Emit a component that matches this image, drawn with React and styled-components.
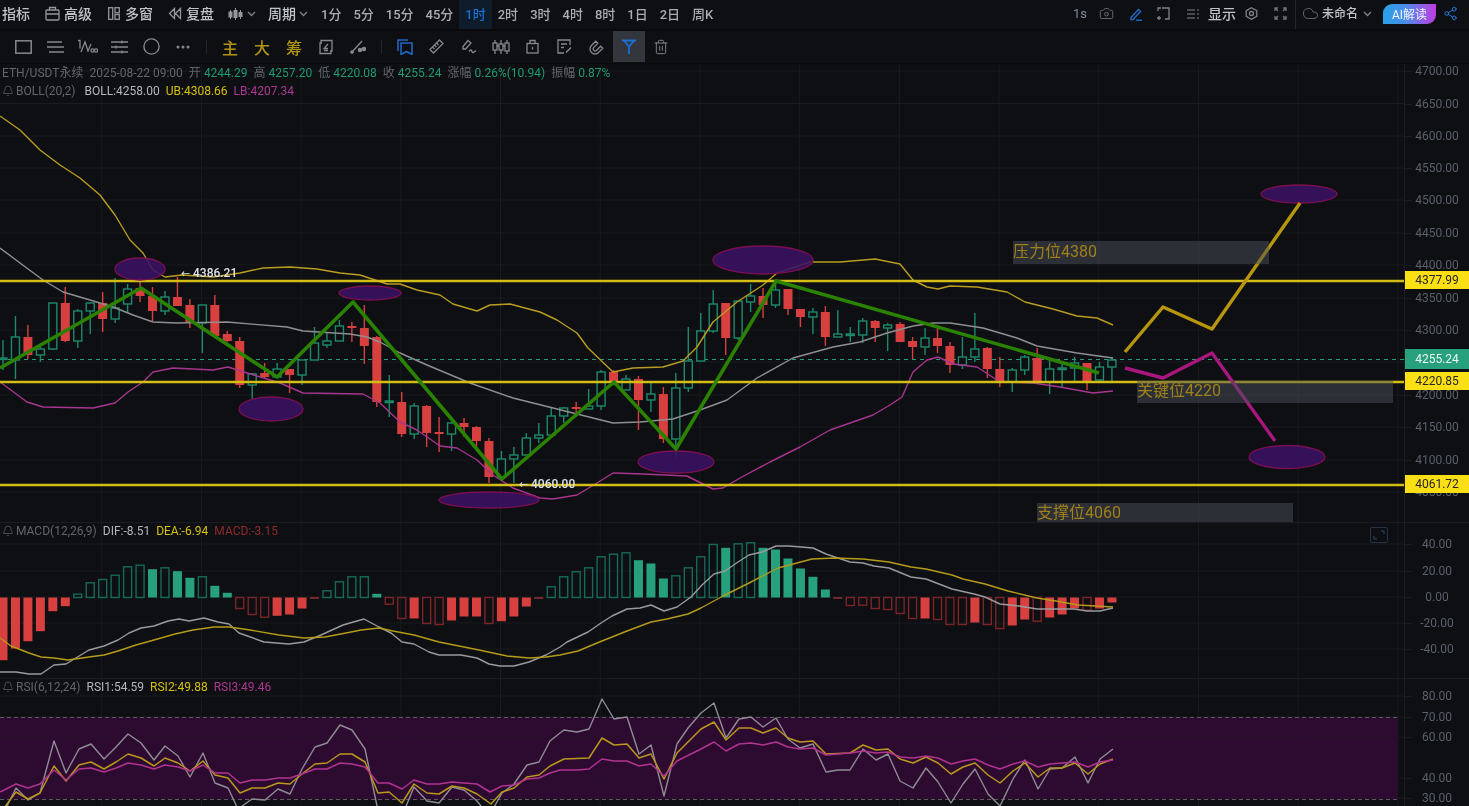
import React from 'react';
import styled, { createGlobalStyle } from 'styled-components';
import { Bell, Camera, Cloud, Share2, Trash2 } from 'lucide-react';

const GlobalStyle = createGlobalStyle`
  html, body { margin: 0; padding: 0; background: #0d0f12; }
  body { font-family: Roboto, "Noto Sans CJK SC", sans-serif; overflow: hidden; }
`;

const Page = styled.div`
  width: 1469px;
  height: 806px;
  display: flex;
  flex-direction: column;
  overflow: hidden;
  background: #0d0f12;
  color: #bfc3c9;
  filter: blur(0.35px);
`;

const TopBar = styled.div`
  height: 29px;
  flex: none;
  display: flex;
  align-items: center;
  padding: 0 11px 0 2px;
  border-bottom: 2px solid #090a0c;
  box-sizing: content-box;
  margin-bottom: -1px;
`;

const TopItem = styled.div`
  display: flex;
  align-items: center;
  gap: ${p => p.$gap ?? 4}px;
  margin-left: ${p => p.$ml ?? 0}px;
  margin-bottom: 2px;
  font-size: 14px;
  font-weight: 500;
  line-height: 20px;
  white-space: nowrap;
  flex: none;
`;

const Interval = styled.div`
  height: 29px;
  padding: 0 6px 2px;
  box-sizing: border-box;
  min-width: 20px;
  display: flex;
  align-items: center;
  justify-content: center;
  font-size: 13px;
  font-weight: 500;
  color: ${p => (p.$active ? '#1a6fd0' : '#a9adb4')};
  background: ${p => (p.$active ? '#0e1c2c' : 'transparent')};
  margin-left: ${p => p.$ml ?? 0}px;
`;

const RightGroup = styled.div`
  margin-left: auto;
  height: 29px;
  display: flex;
  align-items: center;
`;

const Speed = styled.span`
  font-size: 13px;
  color: #7b8ea4;
  width: 12px;
  margin-bottom: 2px;
`;

const VDivider = styled.div`
  width: 1px;
  height: 29px;
  background: #24262b;
  margin-left: ${p => p.$ml ?? 0}px;
`;

const AiButton = styled.div`
  width: 53px;
  height: 20px;
  margin-left: 11px;
  margin-bottom: 2px;
  display: flex;
  align-items: center;
  justify-content: center;
  color: #f2f5ff;
  font-size: 12px;
  border-radius: 9px 0 9px 0;
  background: linear-gradient(90deg, #27a3e6 0%, #4e8bea 45%, #c23be2 100%);
`;

const ToolBar = styled.div`
  height: 33px;
  flex: none;
  display: flex;
  align-items: center;
  padding-left: 7px;
  border-bottom: 1px solid #090a0c;
`;

const ToolCell = styled.div`
  width: 32px;
  height: 31px;
  flex: none;
  display: flex;
  align-items: center;
  justify-content: center;
  background: ${p => (p.$active ? '#33363c' : 'transparent')};
  color: #7f8287;
`;

const GoldChar = styled(ToolCell)`
  color: #b09314;
  font-size: 16px;
  font-weight: 500;
`;

const ToolSep = styled.div`
  width: 1px;
  height: 14px;
  background: #24262b;
  margin: 0 ${p => p.$r ?? 7}px 0 ${p => p.$l ?? 7}px;
`;

const Icon = styled.svg.attrs(p => ({
  width: p.$w,
  height: p.$h ?? p.$w,
  viewBox: `0 0 ${p.$w} ${p.$h ?? p.$w}`,
}))`
  display: block;
  flex: none;
  fill: none;
  stroke: currentColor;
  stroke-width: ${p => p.$sw ?? 1.3};
  color: ${p => p.$c ?? '#85888e'};
  margin-left: ${p => p.$ml ?? 0}px;
  margin-bottom: ${p => p.$mb ?? 0}px;
`;

const Pane = styled.section`
  flex: ${p => (p.$h ? 'none' : '1')};
  height: ${p => (p.$h ? `${p.$h}px` : 'auto')};
  box-sizing: border-box;
  display: grid;
  grid-template-columns: 1405px 64px;
  border-bottom: ${p => (p.$last ? 'none' : '1px solid #1a1c20')};
  min-height: 0;
`;

const ChartArea = styled.div`
  position: relative;
  overflow: hidden;
  border-right: 1px solid #1c1e22;
  box-sizing: content-box;
  width: 1404px;
  svg.chart { display: block; }
`;

const Axis = styled.div`
  position: relative;
  overflow: hidden;
`;

const Tick = styled.div`
  position: absolute;
  left: 0;
  right: 0;
  text-align: center;
  transform: translateY(-50%);
  font-size: 12px;
  line-height: 14px;
  color: #5a606c;
  &::before {
    content: '';
    position: absolute;
    left: 0;
    top: 50%;
    width: 7px;
    height: 1px;
    background: #1a1c20;
  }
`;

const PriceTag = styled.div`
  position: absolute;
  left: 0;
  right: 0;
  height: ${p => (p.$tall ? 20 : 18)}px;
  display: flex;
  align-items: center;
  justify-content: center;
  font-size: 12px;
  background: ${p => p.$bg};
  color: ${p => p.$fg};
`;

const Legend = styled.div`
  position: absolute;
  left: 2px;
  top: ${p => p.$top ?? 0}px;
  font-size: 12px;
  line-height: 18px;
  color: #62666c;
  pointer-events: none;
`;

const LegendRow = styled.div`
  display: flex;
  align-items: center;
  gap: ${p => p.$gap ?? 6}px;
  white-space: nowrap;
`;

const LegendName = styled.span`
  display: flex;
  align-items: center;
  gap: 2px;
  margin-right: ${p => p.$mr ?? 3}px;
`;

const Pair = styled.span`
  display: flex;
  gap: 3px;
`;

const Value = styled.span`
  color: ${p => p.$c ?? '#1f9a75'};
`;

const Note = styled.div`
  position: absolute;
  height: ${p => p.$h}px;
  width: 256px;
  line-height: ${p => p.$h - 2}px;
  font-size: 16px;
  color: #a08018;
  background: rgba(76, 80, 88, 0.5);
  white-space: nowrap;
`;

const ExpandBox = styled.div`
  position: absolute;
  left: 1370px;
  top: 4px;
  width: 18px;
  height: 16px;
  box-sizing: border-box;
  border: 1px solid #223349;
  border-radius: 2px;
  display: flex;
  align-items: center;
  justify-content: center;
`;

// pixel read off the chart: wickTop, bodyTop, bodyBottom, wickBottom, up/down
const candles = [
  [340, 358, 359.5, 370, 'u'], [316, 337, 360, 379, 'u'], [325, 337, 355, 359, 'd'], [347, 349, 355, 362, 'u'],
  [303, 303, 349, 350, 'u'], [287, 303, 341, 342, 'd'], [309, 311, 341, 348, 'u'], [302, 303, 311, 334, 'u'],
  [292, 303, 319, 332, 'd'], [278, 308, 319, 323, 'u'], [284, 289, 304, 313, 'u'], [277, 288, 296, 302, 'd'],
  [287, 296, 311, 321, 'd'], [291, 297, 311, 315, 'u'], [277, 297, 306, 306, 'd'], [299, 305, 322, 328, 'd'],
  [305, 305, 323, 353, 'u'], [295, 305, 336, 338, 'd'], [331, 334, 341, 342, 'd'], [337, 341, 385, 388, 'd'],
  [373, 374, 385, 400, 'u'], [363, 373, 377, 378, 'd'], [363, 369, 377, 378, 'u'], [369, 369, 375, 393, 'd'],
  [360, 360, 375, 385, 'u'], [327, 343, 360, 360, 'u'], [332, 341, 345, 348, 'u'], [320, 326, 341, 341, 'u'],
  [322, 326, 328, 342, 'd'], [305, 328, 346, 364, 'd'], [336, 337, 402, 407, 'd'], [375, 401, 402.5, 417, 'u'],
  [392, 402, 434, 437, 'd'], [403, 406, 434, 439, 'u'], [405, 406, 433, 447, 'd'], [417, 432, 434, 452, 'd'],
  [422, 423, 434, 451, 'u'], [418, 423, 427, 437, 'd'], [426, 427, 441, 447, 'd'], [438, 441, 477, 483, 'd'],
  [451, 459, 477, 477, 'u'], [447, 455, 459, 483, 'u'], [433, 438, 455, 455, 'u'], [423, 435, 438, 443, 'u'],
  [408, 416, 435, 435, 'u'], [407, 408, 416, 423, 'u'], [402, 407, 409, 417, 'd'], [389, 406, 409, 409, 'u'],
  [370, 372, 406, 410, 'u'], [370, 372, 383, 385, 'd'], [375, 379, 390, 390, 'u'], [376, 379, 400, 430, 'd'],
  [383, 394, 400, 412, 'u'], [387, 394, 439, 443, 'd'], [373, 388, 439, 457, 'u'], [327, 361, 388, 392, 'u'],
  [313, 331, 361, 361, 'u'], [290, 304, 331, 333, 'u'], [303, 303, 338, 355, 'd'], [301, 301, 338, 340, 'u'],
  [284, 296, 302, 312, 'u'], [288, 296, 305, 318, 'd'], [282, 290, 305, 308, 'u'], [289, 289, 309, 315, 'd'],
  [309, 309, 317, 327, 'd'], [308, 312, 317, 334, 'u'], [306, 312, 337, 346, 'd'], [310, 334, 337, 337, 'u'],
  [327, 334, 335.5, 342, 'u'], [318, 321, 335, 343, 'u'], [320, 321, 328, 342, 'd'], [323, 325, 328, 351, 'u'],
  [322, 324, 342, 342, 'd'], [337, 341, 347, 359, 'd'], [328, 338, 347, 355, 'u'], [325, 338, 346, 353, 'd'],
  [342, 346, 365, 373, 'd'], [337, 357, 365, 369, 'u'], [313, 349, 357, 362, 'u'], [347, 348, 369, 378, 'd'],
  [357, 369, 382, 387, 'd'], [368, 370, 382, 392, 'u'], [355, 357, 370, 375, 'u'], [348, 358, 382, 383, 'd'],
  [357, 369, 382, 394, 'u'], [363, 368, 369.5, 388, 'u'], [357, 363, 368, 382, 'u'], [363, 363, 381, 390, 'd'],
  [362, 367, 380, 381, 'u'], [357, 360, 367, 382, 'u'],
];

const bollUp = [[0,116],[20,130],[40,150],[60,165],[80,178],[100,195],[115,215],[130,240],[143,253],[153,270],[165,277],[182,275],[213,277],[240,273],[263,268],[290,267],[317,269],[340,273],[360,275],[387,284],[400,284],[417,290],[440,295],[453,304],[477,311],[490,305],[510,304],[540,312],[557,320],[577,333],[588,348],[613,372],[633,368],[663,367],[683,361],[697,347],[713,322],[737,302],[763,285],[777,273],[810,262],[840,262],[875,259],[900,264],[913,280],[927,287],[938,289],[950,286],[977,287],[1007,292],[1025,302],[1053,309],[1077,316],[1097,318],[1113,325]];
const bollMid = [[0,248],[20,263],[43,280],[63,292],[90,300],[113,307],[133,315],[153,322],[177,323],[227,322],[287,327],[303,331],[350,334],[367,337],[380,342],[400,353],[427,365],[470,383],[513,398],[553,408],[593,418],[613,423],[640,422],[673,419],[700,410],[727,400],[757,378],[793,358],[833,347],[860,342],[887,333],[913,326],[933,323],[950,323],[983,328],[1017,338],[1037,346],[1077,353],[1113,358]];
const bollLow = [[0,382],[27,402],[43,407],[93,408],[115,403],[128,392],[143,382],[153,372],[173,368],[213,370],[228,367],[247,373],[280,383],[303,393],[363,394],[380,403],[400,422],[417,430],[440,446],[457,448],[477,460],[493,475],[513,488],[540,498],[553,499],[577,495],[597,483],[613,473],[643,474],[687,476],[713,489],[723,488],[740,478],[770,462],[800,447],[830,430],[873,415],[890,405],[902,397],[913,372],[927,360],[938,357],[953,364],[977,367],[1000,382],[1033,383],[1060,387],[1093,393],[1113,391]];

const ovals = [
  [140, 269, 25, 11], [370, 293, 31, 7], [271, 409, 32, 12], [489, 500, 50, 8],
  [676, 462, 38, 11], [763, 260, 50, 14], [1299, 194, 38, 9], [1287, 457, 38, 11.5],
];

const trend = [[0,368],[141,288],[277,377],[353,302],[502,479],[614,382],[676,449],[776,281],[1099,373]];
const goldPath = [[1125,352],[1163,307],[1212,329],[1300,203]];
const pinkPath = [[1125,368],[1163,378],[1212,353],[1275,441]];

// signed bar height from the zero line, true = solid
const macdBars = [
  [-62.7,1],[-51,1],[-43.7,1],[-33.7,1],[-13.7,1],[-8.7,1],[3.3,0],[14.7,0],[18,0],[22.3,0],[30.7,0],[32.3,0],
  [28.3,1],[29.7,0],[26.3,1],[19.7,1],[20.7,0],[11.7,1],[4.7,1],[-11,0],[-17,0],[-19.7,0],[-18.3,1],[-17,1],
  [-11,1],[-1,1],[6.7,0],[15.7,0],[20.7,0],[20.7,0],[3.7,1],[-6.7,0],[-21,0],[-21,1],[-26,0],[-27,0],[-23,1],
  [-19,1],[-19,1],[-26,0],[-23.7,1],[-19,1],[-9,1],[-1,1],[10.7,0],[20.7,0],[25.7,0],[29.7,0],[40.7,0],[43.3,0],
  [44.7,0],[37.3,1],[34,1],[19,1],[21.7,0],[29.7,0],[40.7,0],[53,0],[49.7,1],[53.7,0],[54.7,0],[49.7,1],[48,1],
  [39,1],[29,1],[20.7,1],[8,1],[-1,1],[-8,0],[-7.7,0],[-11,0],[-12,0],[-16,0],[-21,0],[-21,1],[-22,0],[-27,0],
  [-27,0],[-25,1],[-27,0],[-31,0],[-28,1],[-22,1],[-23.7,0],[-20,1],[-17,1],[-11,1],[-12.7,0],[-11,1],[-5,1],
];

const dif = [[0,672],[16,672],[29,674],[41,674],[54,665],[66,664],[89,650],[104,646],[118,640],[129,633],[141,628],[154,626],[168,621],[179,619],[189,621],[204,618],[218,622],[229,624],[239,633],[264,642],[289,644],[304,642],[321,635],[343,625],[364,619],[379,627],[391,633],[402,642],[414,644],[429,652],[439,655],[461,655],[477,658],[489,664],[500,666],[514,666],[529,662],[546,655],[560,647],[567,642],[588,632],[601,623],[612,616],[627,609],[640,608],[651,605],[664,611],[677,607],[691,597],[702,585],[714,574],[725,571],[738,562],[749,555],[762,552],[776,546],[789,546],[813,548],[826,554],[850,562],[863,563],[874,566],[889,568],[911,577],[926,579],[952,589],[974,594],[985,597],[1000,604],[1019,606],[1037,609],[1074,609],[1087,611],[1100,611],[1113,608]];
const dea = [[0,638],[11,646],[29,653],[41,657],[54,658],[68,660],[89,657],[104,655],[118,651],[136,645],[154,640],[175,634],[193,630],[214,627],[229,627],[250,630],[279,635],[304,638],[325,637],[346,633],[361,630],[379,628],[393,631],[414,635],[439,642],[464,647],[479,650],[507,656],[529,658],[546,657],[560,655],[578,651],[597,643],[627,631],[651,622],[667,619],[688,614],[701,608],[723,596],[749,583],[778,568],[812,559],[834,558],[863,559],[889,562],[911,567],[926,569],[952,575],[963,579],[985,584],[1008,591],[1037,598],[1056,601],[1078,605],[1096,606],[1113,607]];

const rsi1 = [[7,806],[16,788],[28,800],[40,793],[54,741],[66,773],[79,749],[91,744],[104,759],[116,747],[128,734],[141,743],[154,760],[165,746],[178,756],[190,777],[203,753],[215,783],[228,788],[238,809],[252,799],[265,800],[278,789],[290,794],[302,769],[315,747],[327,743],[340,725],[352,730],[365,749],[377,806],[389,820],[402,816],[414,787],[427,801],[439,803],[452,787],[464,790],[477,801],[489,816],[502,793],[514,784],[527,765],[539,762],[550,741],[560,733],[564,730],[577,732],[589,729],[602,699],[614,719],[627,717],[639,754],[651,745],[664,796],[677,744],[688,728],[701,713],[714,703],[726,738],[739,719],[751,717],[763,727],[776,718],[788,739],[800,748],[813,744],[826,772],[838,770],[850,770],[863,749],[876,760],[888,754],[900,781],[913,788],[926,768],[938,782],[951,803],[963,784],[975,769],[988,794],[1000,806],[1013,779],[1025,760],[1038,789],[1050,769],[1062,768],[1075,757],[1088,783],[1100,759],[1113,749]];
const rsi2 = [[4,808],[16,792],[28,799],[40,793],[54,766],[66,781],[79,765],[91,762],[104,769],[116,762],[128,754],[141,758],[154,766],[165,758],[178,763],[190,771],[203,761],[215,775],[228,778],[240,793],[252,788],[265,788],[278,783],[290,784],[302,774],[315,764],[327,763],[340,754],[352,754],[365,762],[378,793],[389,792],[402,803],[414,784],[427,793],[439,794],[452,786],[464,788],[477,794],[491,804],[502,792],[514,788],[527,777],[539,775],[550,766],[560,761],[564,759],[589,758],[602,738],[614,745],[627,744],[639,758],[651,754],[664,779],[677,753],[701,729],[714,722],[726,740],[739,728],[751,728],[763,733],[776,728],[788,738],[800,742],[813,741],[826,754],[850,753],[863,745],[876,750],[888,749],[900,759],[913,763],[926,757],[938,763],[951,774],[963,767],[975,763],[988,775],[1000,783],[1013,771],[1025,763],[1038,777],[1050,768],[1062,768],[1075,763],[1088,774],[1100,764],[1113,759]];
const rsi3 = [[0,792],[16,784],[28,788],[40,784],[54,770],[66,780],[79,769],[91,768],[104,772],[116,768],[128,763],[141,765],[154,769],[165,765],[178,767],[190,771],[203,765],[215,773],[228,773],[240,783],[252,780],[265,780],[278,778],[290,778],[302,774],[315,769],[327,769],[340,763],[352,764],[365,767],[378,783],[389,783],[402,789],[414,780],[427,784],[439,784],[452,782],[464,783],[477,784],[490,792],[502,786],[514,785],[527,779],[539,778],[550,773],[560,770],[577,770],[589,769],[602,759],[614,761],[627,761],[639,766],[651,764],[664,776],[677,761],[701,749],[714,742],[726,751],[739,744],[751,743],[763,745],[776,742],[788,747],[800,749],[813,748],[826,755],[850,753],[863,751],[876,753],[888,752],[900,757],[913,758],[926,756],[938,758],[951,764],[963,761],[975,759],[988,765],[1000,769],[1013,764],[1025,761],[1038,767],[1050,764],[1062,763],[1075,762],[1088,767],[1100,762],[1113,760]];

const toPoints = list => list.map(p => p.join(',')).join(' ');
const barX = i => 3 + 12.46 * i;

const GRID = '#191b1f';
const GREEN = '#1d8a6b';
const RED = '#d8403f';

const vLines = Array.from({ length: 14 }, (_, k) => 2 + 99.7 * (k + 1));

const priceTicks = [
  ['4700.00', 71], ['4650.00', 103.5], ['4600.00', 136], ['4550.00', 168], ['4500.00', 200], ['4450.00', 233],
  ['4400.00', 265], ['4350.00', 298], ['4300.00', 330], ['4250.00', 362], ['4200.00', 395], ['4150.00', 427],
  ['4100.00', 460], ['4050.00', 492],
];
const macdTicks = [['40.00', 544], ['20.00', 571], ['0.00', 597], ['-20.00', 623], ['-40.00', 649]];
const rsiTicks = [['80.00', 696], ['70.00', 717], ['60.00', 737], ['40.00', 778], ['30.00', 798]];

const Grid = ({ ticks, top, bottom }) => (
  <g stroke={GRID} strokeWidth="1">
    {vLines.map(x => <line key={x} x1={x} x2={x} y1={top} y2={bottom} />)}
    {ticks.map(([label, y]) => <line key={label} x1="0" x2="1405" y1={y} y2={y} />)}
  </g>
);

const Line = ({ points, color, width = 1.4 }) => (
  <polyline points={toPoints(points)} fill="none" stroke={color} strokeWidth={width} strokeLinejoin="round" />
);

const CandleStick = ({ data, index }) => {
  const [wt, bt, bb, wb, dir] = data;
  const x = barX(index);
  const up = dir === 'u';
  const c = up ? GREEN : RED;
  return (
    <g>
      <line x1={x} x2={x} y1={wt} y2={bt} stroke={c} strokeWidth="1.4" />
      <line x1={x} x2={x} y1={bb} y2={wb} stroke={c} strokeWidth="1.4" />
      {up
        ? <rect x={x - 4} y={bt} width="8" height={Math.max(bb - bt, 1)} fill="#0d0f12" stroke={c} strokeWidth="1.4" />
        : <rect x={x - 4.5} y={bt} width="9" height={Math.max(bb - bt, 1.5)} fill={c} />}
    </g>
  );
};

const MacdBar = ({ data, index }) => {
  const [v, solid] = data;
  const x = barX(index);
  const y = v > 0 ? 597.5 - v : 597.5;
  const h = Math.abs(v);
  if (solid) {
    return <rect x={x - 4.5} y={y} width="9" height={h} fill={v > 0 ? '#26a17b' : RED} />;
  }
  return <rect x={x - 4} y={y} width="8" height={h} fill="none" stroke={v > 0 ? '#15695a' : '#7c2428'} strokeWidth="1.4" />;
};

const PointerLabel = ({ x, y, children }) => (
  <text x={x} y={y} fontSize="12" fontWeight="500" fill="#dfe3e6">
    <tspan fontSize="9">←</tspan> {children}
  </text>
);

const MainChart = () => (
  <svg className="chart" width="1404" height="458" viewBox="0 64 1404 458">
    <Grid ticks={priceTicks} top={64} bottom={522} />
    <line x1="0" x2="1405" y1="359.5" y2="359.5" stroke="#26a17b" strokeWidth="1" strokeDasharray="4 4" />
    {candles.map((c, i) => <CandleStick key={i} data={c} index={i} />)}
    <Line points={bollUp} color="#b99d1f" />
    <Line points={bollMid} color="#8f8f92" />
    <Line points={bollLow} color="#a8358f" />
    {[281, 382, 485].map(y => <line key={y} x1="0" x2="1405" y1={y} y2={y} stroke="#d4bd14" strokeWidth="2.4" />)}
    {ovals.map(([cx, cy, rx, ry]) => (
      <ellipse key={cx} cx={cx} cy={cy} rx={rx} ry={ry} fill="#3a1263" fillOpacity="0.88" stroke="#7c0f52" strokeWidth="1.3" />
    ))}
    <Line points={trend} color="#2a8200" width={3.6} />
    <Line points={goldPath} color="#b8960c" width={3.4} />
    <Line points={pinkPath} color="#a8177e" width={3.4} />
    <PointerLabel x={181} y={277}>4386.21</PointerLabel>
    <PointerLabel x={519} y={488}>4060.00</PointerLabel>
  </svg>
);

const MacdChart = () => (
  <svg className="chart" width="1404" height="155" viewBox="0 523 1404 155">
    <Grid ticks={macdTicks} top={523} bottom={678} />
    {macdBars.map((b, i) => <MacdBar key={i} data={b} index={i} />)}
    <Line points={dif} color="#9a9a9e" />
    <Line points={dea} color="#b59b18" />
  </svg>
);

const RsiChart = () => (
  <svg className="chart" width="1404" height="127" viewBox="0 679 1404 127">
    <rect x="0" y="717" width="1398" height="82.500" fill="#2e0b30" />
    <Grid ticks={rsiTicks} top={679} bottom={806} />
    <rect x="0" y="717" width="1398" height="82.500" fill="#2e0b30" fillOpacity="0.75" />
    <line x1="0" x2="1398" y1="717.500" y2="717.500" stroke="#5d5a60" strokeDasharray="4 3" />
    <line x1="0" x2="1398" y1="799.500" y2="799.500" stroke="#5d5a60" strokeDasharray="4 3" />
    <Line points={rsi1} color="#8f8d94" />
    <Line points={rsi2} color="#b9981c" width={1.5} />
    <Line points={rsi3} color="#b0348f" width={1.5} />
  </svg>
);

const AxisTicks = ({ ticks, top }) => ticks.map(([label, y]) => (
  <Tick key={label} style={{ top: y - top }}>{label}</Tick>
));

const Chevron = ({ ml, mb }) => (
  <Icon $w={9} $h={6} $ml={ml} $mb={mb} $c="#7f8287"><polyline points="1,1 4.5,4.5 8,1" /></Icon>
);

const INTERVALS = ['1分', '5分', '15分', '45分', '1时', '2时', '3时', '4时', '8时', '1日', '2日', '周K'];

const App = () => (
  <Page>
    <GlobalStyle />
    <TopBar>
      <TopItem>指标</TopItem>
      <TopItem $ml={15}>
        <Icon $w={15} $c="#93969b"><rect x="1" y="4" width="13" height="10" rx="1" /><path d="M4.5 4V1.5h6V4M1 8h13" /></Icon>
        高级
      </TopItem>
      <TopItem $ml={16} $gap={5}>
        <Icon $w={12} $h={13} $c="#93969b"><rect x=".7" y=".7" width="4" height="11.6" /><rect x="7" y=".7" width="4.3" height="5" /><rect x="7" y="7.5" width="4.3" height="4.8" /></Icon>
        多窗
      </TopItem>
      <TopItem $ml={15}>
        <Icon $w={14} $h={13} $c="#93969b"><path d="M6.5 1.5 1.5 6.5l5 5zM12.5 1.5l-5 5 5 5z" /></Icon>
        复盘
      </TopItem>
      <TopItem $ml={14}>
        <Icon $w={15} $h={14} $c="#93969b" $sw={1}>
          <path d="M2.5 3v9M7.5 1v12M12.5 3v9" />
          <rect x="1" y="5" width="3" height="5" fill="currentColor" /><rect x="6" y="3.5" width="3" height="7" fill="currentColor" /><rect x="11" y="5.500" width="3" height="4" fill="currentColor" />
        </Icon>
        <Chevron />
      </TopItem>
      <TopItem $ml={12} $gap={3}>周期<Chevron /></TopItem>
      {INTERVALS.map((label, i) => (
        <Interval key={label} $ml={i === 0 ? 7 : 0} $active={label === '1时'}>{label}</Interval>
      ))}
      <RightGroup>
        <Speed>1s</Speed>
        <Camera size={15} strokeWidth={1.3} color="#7a7d82" style={{ marginLeft: 14, marginBottom: 2 }} />
        <Icon $w={14} $ml={15} $mb={2} $c="#1d66c2" $sw={1.5}><path d="M2 10.500 9.500 2.500l2 2-7.500 8H2zM7 13.300h6" /></Icon>
        <Icon $w={13} $ml={14} $mb={2} $c="#7f8287"><path d="M5 1h7v11H8M1 4V1h3M2 9v4M0 11h4" /></Icon>
        <Icon $w={12} $ml={17} $mb={2} $c="#5c5f64"><path d="M0 2h8M10 2h2M0 6h8M10 6h2M0 10h8M10 10h2" /></Icon>
        <TopItem $ml={9}>显示</TopItem>
        <Icon $w={13} $ml={9} $mb={2} $c="#7f8287"><path d="M6.500.8 11.800 3.700v5.600l-5.300 2.900-5.300-2.900V3.700z" /><circle cx="6.500" cy="6.500" r="2" /></Icon>
        <Icon $w={13} $ml={16} $mb={2} $c="#6f7277"><path d="M1 4V1h3M9 1h3v3M12 9v3H9M4 12H1V9M1 1l3 3M12 1 9 4M12 12 9 9M1 12l3-3" /></Icon>
        <VDivider $ml={8} />
        <Cloud size={17} strokeWidth={1.2} color="#6f7277" style={{ marginLeft: 6, marginBottom: 2 }} />
        <TopItem $ml={3}><span style={{ fontSize: 12 }}>未命名</span></TopItem>
        <Chevron ml={5} mb={2} />
        <AiButton>AI解读</AiButton>
        <Share2 size={15} strokeWidth={1.6} color="#1f78d6" style={{ marginLeft: 7, marginBottom: 2 }} />
      </RightGroup>
    </TopBar>

    <ToolBar>
      <ToolCell><Icon $w={17} $h={14} $sw={1.5}><rect x=".8" y=".8" width="15.400" height="12.400" /></Icon></ToolCell>
      <ToolCell><Icon $w={17} $h={14}><path d="M0 2h15M0 7h17M2 12h15" /></Icon></ToolCell>
      <ToolCell><Icon $w={21} $h={15}><path d="M1 1.500h2v8M4 13 8 3l3 9 3-7" /><circle cx="15.500" cy="11.500" r="1.600" /><circle cx="19" cy="11.500" r="1.600" /></Icon></ToolCell>
      <ToolCell><Icon $w={17} $h={14}><path d="M0 2h17M0 7h17M0 12h17M11 .5v3M5 5.500v3M11 10.500v3" /></Icon></ToolCell>
      <ToolCell><Icon $w={17} $sw={1.4}><circle cx="8.500" cy="8.500" r="7.600" /></Icon></ToolCell>
      <ToolCell><Icon $w={14} $h={4} $sw={0}><circle cx="2" cy="2" r="1.500" fill="currentColor" /><circle cx="7" cy="2" r="1.500" fill="currentColor" /><circle cx="12" cy="2" r="1.500" fill="currentColor" /></Icon></ToolCell>
      <ToolSep />
      <GoldChar>主</GoldChar>
      <GoldChar>大</GoldChar>
      <GoldChar>筹</GoldChar>
      <ToolCell><Icon $w={16}><path d="M3 3.500V1.500h11v10.500h-2M13 12.500v2H2V4h2" /><path d="M10 5 6 9.500h4M6 11.500h4" /></Icon></ToolCell>
      <ToolCell><Icon $w={16}><path d="M12 2 2 13" /><circle cx="2" cy="13" r="1.200" fill="currentColor" /><circle cx="10" cy="11" r="1.600" fill="currentColor" /><circle cx="14" cy="10" r="1.600" fill="currentColor" /></Icon></ToolCell>
      <ToolSep $l={6.5} />
      <ToolCell><Icon $w={16} $c="#1d66c2" $sw={1.6}><path d="M1 12V1h10M4 4h11v11.500l-5.500-3-5.500 3z" /></Icon></ToolCell>
      <ToolCell><Icon $w={15}><path d="M10.500 1 14 4.500 4.500 14 1 10.500zM8 4.500l1.500 1.500M6 6.500l1.500 1.500M4 8.500 5.500 10" /></Icon></ToolCell>
      <ToolCell><Icon $w={16} $h={15}><path d="M7 1.500 10 4 4.500 10H2V7.500zM8 12.500c1.500-2 2.500-2 3 0s1.500 1 4-1" /></Icon></ToolCell>
      <ToolCell><Icon $w={18} $h={14}><path d="M3 0v14M9 0v14M15 0v14" /><rect x="1" y="3" width="4" height="7" fill="#0d0f12" /><rect x="7" y="4" width="4" height="6" fill="#0d0f12" /><rect x="13" y="3" width="4" height="8" fill="#0d0f12" /><path d="M5 6h2M11 6h2" /></Icon></ToolCell>
      <ToolCell><Icon $w={13} $h={15}><rect x="1" y="4.500" width="11" height="9.500" /><path d="M4 4.500V1.500h5v3M6.500 8v2.500" /></Icon></ToolCell>
      <ToolCell><Icon $w={15}><path d="M13 6V1H1v13h6M4 5h6M4 8.500h3M9 13.500l5-5" /></Icon></ToolCell>
      <ToolCell><Icon $w={16}><path d="M6.700 2.200 2.460 6.460A5 5 0 0 0 9.540 13.540L13.800 9.300 11.660 7.170 7.410 11.410A2 2 0 0 1 4.590 8.590L8.830 4.340z" /></Icon></ToolCell>
      <ToolCell $active><Icon $w={16} $c="#1a70d4" $sw={1.8}><path d="M1 1.500h14M3 1.500l5 6 5-6M8 7.500V15" /></Icon></ToolCell>
      <ToolCell><Trash2 size={16} strokeWidth={1.4} color="#85888e" /></ToolCell>
    </ToolBar>

    <Pane $h={459}>
      <ChartArea>
        <MainChart />
        <Note style={{ left: 1013, top: 177 }} $h={23}>压力位4380</Note>
        <Note style={{ left: 1137, top: 317 }} $h={22}>关键位4220</Note>
        <Note style={{ left: 1037, top: 439 }} $h={21}>支撑位4060</Note>
        <Legend>
          <LegendRow $gap={6}>
            <span>ETH/USDT永续</span>
            <span>2025-08-22 09:00</span>
            <Pair>开<Value>4244.29</Value></Pair>
            <Pair>高<Value>4257.20</Value></Pair>
            <Pair>低<Value>4220.08</Value></Pair>
            <Pair>收<Value>4255.24</Value></Pair>
            <Pair>涨幅<Value>0.26%(10.94)</Value></Pair>
            <Pair>振幅<Value>0.87%</Value></Pair>
          </LegendRow>
          <LegendRow>
            <LegendName $mr={3}><Bell size={12} strokeWidth={1.4} />BOLL(20,2)</LegendName>
            <Value $c="#b4b6ba">BOLL:4258.00</Value>
            <Value $c="#d6c00e">UB:4308.66</Value>
            <Value $c="#ad3795">LB:4207.34</Value>
          </LegendRow>
        </Legend>
      </ChartArea>
      <Axis>
        <AxisTicks ticks={priceTicks.filter(t => t[0] !== '4250.00')} top={64} />
        <PriceTag $bg="#fadf14" $fg="#26262a" style={{ top: 207 }}>4377.99</PriceTag>
        <PriceTag $tall $bg="#26a17b" $fg="#eef4f2" style={{ top: 285 }}>4255.24</PriceTag>
        <PriceTag $bg="#fadf14" $fg="#26262a" style={{ top: 308 }}>4220.85</PriceTag>
        <PriceTag $bg="#fadf14" $fg="#26262a" style={{ top: 411 }}>4061.72</PriceTag>
      </Axis>
    </Pane>

    <Pane $h={156}>
      <ChartArea>
        <MacdChart />
        <Legend $top={-1}>
          <LegendRow>
            <LegendName $mr={0}><Bell size={12} strokeWidth={1.4} />MACD(12,26,9)</LegendName>
            <Value $c="#b4b6ba">DIF:-8.51</Value>
            <Value $c="#d6c00e">DEA:-6.94</Value>
            <Value $c="#8f2b2c">MACD:-3.15</Value>
          </LegendRow>
        </Legend>
        <ExpandBox>
          <Icon $w={12} $h={10} $c="#2e4663" $sw={1}><path d="M8 1h3v3M1 6v3h3" /></Icon>
        </ExpandBox>
      </ChartArea>
      <Axis><AxisTicks ticks={macdTicks} top={523} /></Axis>
    </Pane>

    <Pane $last>
      <ChartArea>
        <RsiChart />
        <Legend $top={-1}>
          <LegendRow>
            <LegendName $mr={0}><Bell size={12} strokeWidth={1.4} />RSI(6,12,24)</LegendName>
            <Value $c="#b4b6ba">RSI1:54.59</Value>
            <Value $c="#d6c00e">RSI2:49.88</Value>
            <Value $c="#ad3795">RSI3:49.46</Value>
          </LegendRow>
        </Legend>
      </ChartArea>
      <Axis><AxisTicks ticks={rsiTicks} top={679} /></Axis>
    </Pane>
  </Page>
);

export default App;
